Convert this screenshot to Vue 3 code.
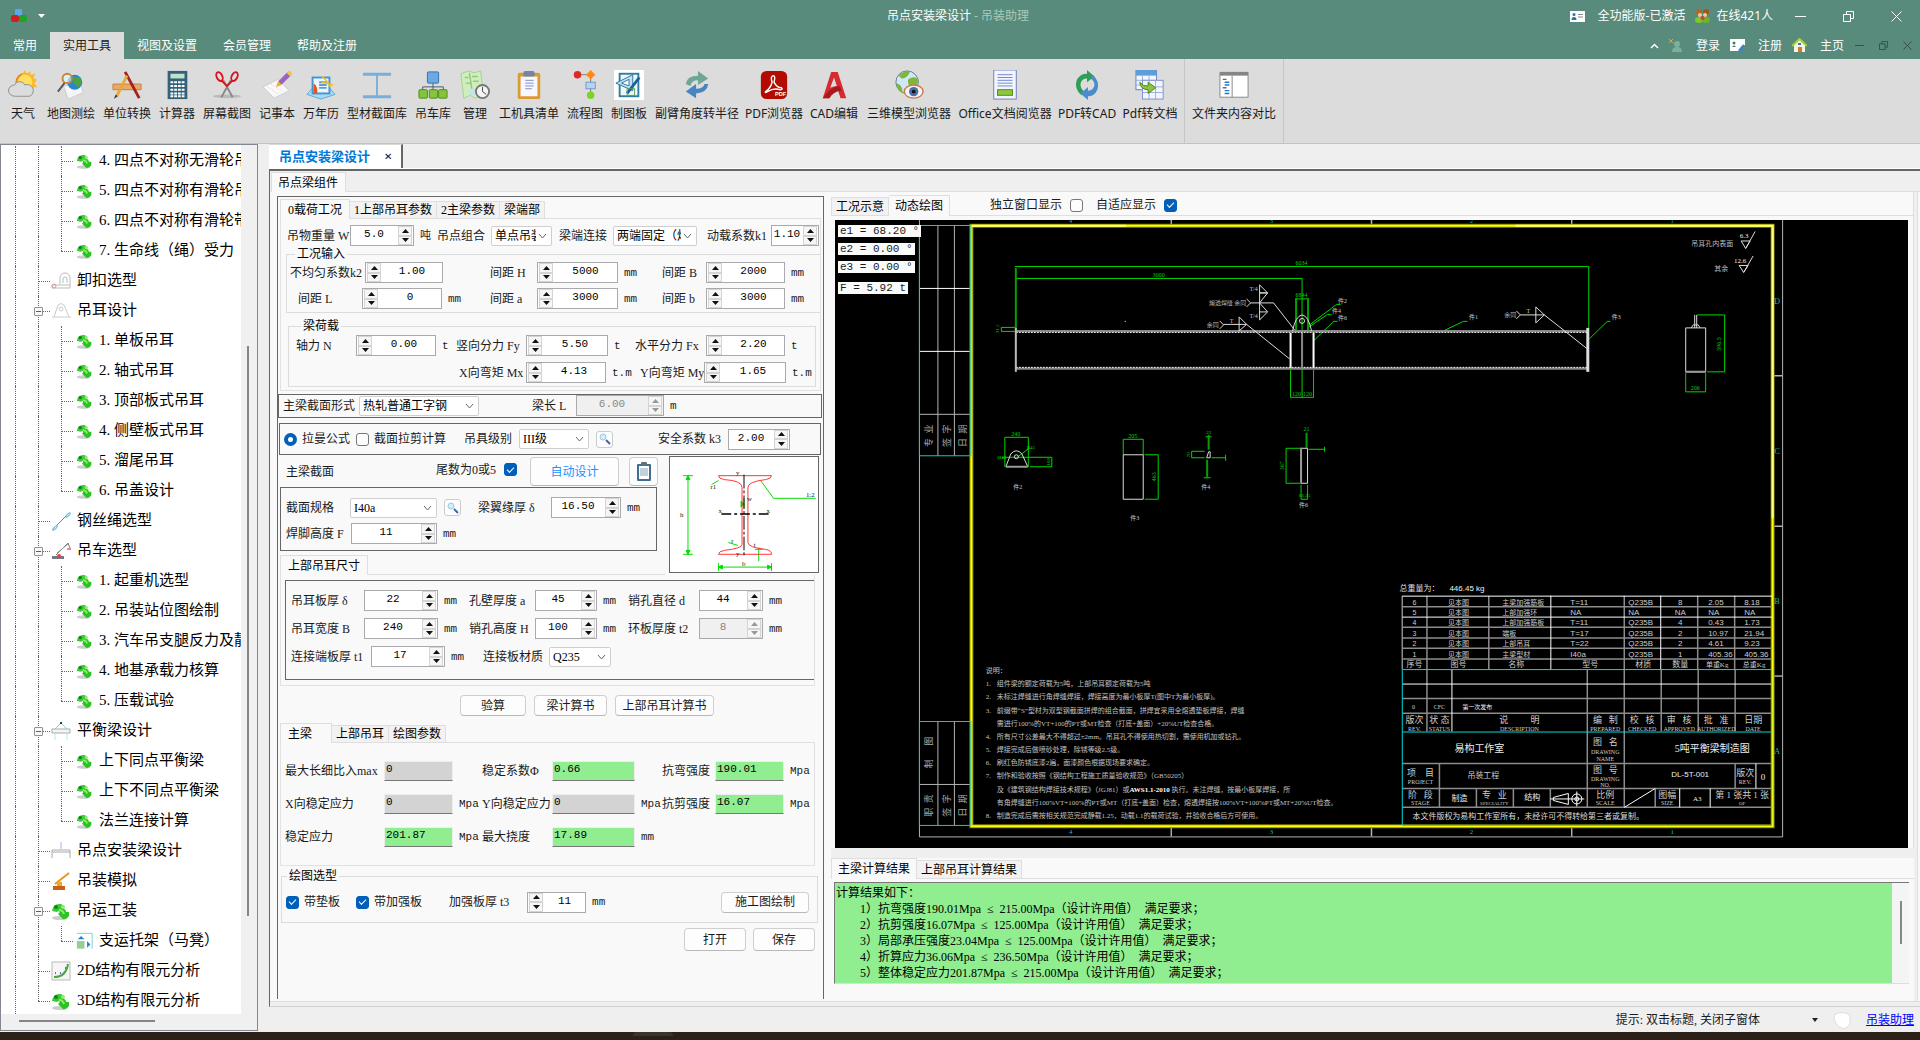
<template>
  <div class="app">
    <header class="titlebar">
      <div class="title-row">
        <div class="quick">
          <svg width="16" height="14" viewBox="0 0 16 14">
            <rect x="4" y="0" width="7" height="7" rx="1" fill="#5aa9ee" />
            <rect x="0" y="6" width="8" height="7" rx="2" fill="#cf1f1f" />
            <rect x="8" y="6" width="8" height="7" rx="2" fill="#22a02c" />
          </svg>
          <svg class="caret" width="7" height="4" viewBox="0 0 7 4"><path d="M0 0h7L3.500 4z" fill="#fff" /></svg>
        </div>
        <h1 class="title">吊点安装梁设计 <span>- 吊装助理</span></h1>
        <div class="account">
          <svg width="15" height="11" viewBox="0 0 15 11">
            <rect width="15" height="11" fill="#fff" />
            <circle cx="4" cy="3.500" r="1.500" fill="#2f6fb5" />
            <path d="M1.500 9q0-3 2.500-3t2.500 3z" fill="#2f6fb5" />
            <path d="M8 3.500h5M8 6h5" stroke="#888" />
          </svg>
          <span class="version">全功能版-已激活</span>
          <svg width="15" height="14" viewBox="0 0 15 14">
            <ellipse cx="4" cy="11" rx="4" ry="3" fill="#7fc62d" />
            <ellipse cx="11" cy="11" rx="4" ry="3" fill="#6db322" />
            <circle cx="4" cy="3" r="3" fill="#b5651d" />
            <circle cx="11" cy="3" r="3" fill="#a5541a" />
            <circle cx="5" cy="6" r="2" fill="#f1c9a0" />
            <circle cx="10" cy="6" r="2" fill="#f1c9a0" />
            <circle cx="7.500" cy="9" r="2" fill="#c9482a" />
          </svg>
          <span class="online">在线421人</span>
        </div>
        <div class="win-btns">
          <button v-for="b in winIcons" :key="b.name" :aria-label="b.name">
            <svg width="11" height="11" viewBox="0 0 11 11" fill="none" stroke="#fff"><path :d="b.d" /></svg>
          </button>
        </div>
      </div>
      <div class="tab-row">
        <nav class="ribbon-tabs">
          <button v-for="t in ribbonTabs" :key="t" :class="{ active: t === '实用工具' }">{{ t }}</button>
        </nav>
        <div class="user-links">
          <svg width="9" height="6" viewBox="0 0 9 6"><path d="M1 5l3.500-3.500L8 5" fill="none" stroke="#fff" stroke-width="1.500" /></svg>
          <svg class="person" width="14" height="14" viewBox="0 0 14 14">
            <circle cx="8" cy="5" r="3" fill="#79b29c" />
            <path d="M3 13q0-5 5-5t5 5z" fill="#79b29c" />
            <path d="M0 0l4 4M4 0l-4 4" stroke="#d6a645" />
          </svg>
          <a href="#">登录</a>
          <svg width="15" height="13" viewBox="0 0 15 13">
            <path d="M0 0h15v6l-6 6H0z" fill="#fff" />
            <circle cx="4" cy="4" r="1.500" fill="#447a69" />
            <path d="M2 8q2-3 4 0z" fill="#447a69" />
            <path d="M14 6l-5 6" stroke="#3a7fd0" stroke-width="2.500" />
          </svg>
          <a href="#">注册</a>
          <svg width="15" height="15" viewBox="0 0 15 15">
            <path d="M2 7v7h11V7L7.500 2z" fill="#f5f2e8" />
            <path d="M0 8l7.500-7L15 8" fill="none" stroke="#a9d13d" stroke-width="2" />
            <rect x="6" y="9" width="4" height="5" fill="#d67a1e" />
            <rect x="6" y="5" width="3" height="2" fill="#3c78b8" />
          </svg>
          <a href="#">主页</a>
        </div>
        <div class="mdi-btns">
          <button v-for="b in winIcons" :key="b.name" :aria-label="'子窗体' + b.name">
            <svg width="9" height="9" viewBox="0 0 11 11" fill="none" stroke="#2c473e"><path :d="b.d" /></svg>
          </button>
        </div>
      </div>
    </header>

    <section class="ribbon">
      <div class="ribbon-group">
        <button v-for="t in tools" :key="t.text" :style="{ width: t.w + 'px' }">
          <svg width="30" height="30" viewBox="0 0 32 32" v-html="t.icon"></svg>
          <span>{{ t.text }}</span>
        </button>
      </div>
      <div class="ribbon-group">
        <button :style="{ width: compare.w + 'px' }">
          <svg width="30" height="30" viewBox="0 0 32 32" v-html="compare.icon"></svg>
          <span>{{ compare.text }}</span>
        </button>
      </div>
    </section>

    <main class="main">
      <aside class="sidebar">
        <div class="tree-body">
          <div class="tree">
            <div v-for="(n, i) in tree" :key="i" class="node">
              <span class="guide"></span>
              <span v-if="n.lv === 3" class="guide"></span>
              <span class="elbow" :class="{ last: n.last, deep: n.lv === 3 }">
                <button v-if="n.open" class="toggle" aria-label="折叠"></button>
              </span>
              <svg class="node-icon" :class="{ deep: n.lv === 3 }" width="20" height="20" viewBox="0 0 20 20" v-html="nodeIcons[n.icon]"></svg>
              <span class="node-text">{{ n.text }}</span>
            </div>
          </div>
          <div class="vbar"><i></i></div>
        </div>
        <div class="hbar"><i></i></div>
      </aside>

      <section class="workspace">
        <div class="doc-tabs">
          <div class="doc-tab">吊点安装梁设计 <button aria-label="关闭">✕</button></div>
        </div>
        <div class="doc">
          <div class="strip outer"><button class="tab active">吊点梁组件</button></div>
          <div class="columns">
            <form class="form" @submit.prevent>
              <div class="strip load">
                <button class="tab active">0载荷工况</button>
                <button class="tab">1上部吊耳参数</button>
                <button class="tab">2主梁参数</button>
                <button class="tab">梁端部</button>
              </div>
              <div class="pane load-pane">
                <div class="row r-weight"><Cells :items="rows.weight" /></div>
                <fieldset class="group cond">
                  <legend>工况输入</legend>
                  <div class="row r-cond"><Cells :items="rows.cond1" /></div>
                  <div class="row r-cond second"><Cells :items="rows.cond2" /></div>
                </fieldset>
                <fieldset class="group beam">
                  <legend>梁荷载</legend>
                  <div class="row r-force"><Cells :items="rows.force" /></div>
                  <div class="row r-moment"><Cells :items="rows.moment" /></div>
                </fieldset>
              </div>

              <div class="frame shape"><div class="row r-shape"><Cells :items="rows.shape" /></div></div>

              <div class="frame formula">
                <label class="tick"><input type="radio" name="method" checked>拉曼公式</label>
                <label class="tick"><input type="checkbox">截面拉剪计算</label>
                <div class="row r-level"><Cells :items="rows.level" /></div>
                <button class="mini" aria-label="查询"><svg width="12" height="12" viewBox="0 0 12 12" v-html="searchIcon"></svg></button>
                <div class="row r-safe"><Cells :items="rows.safe" /></div>
              </div>

              <div class="section">
                <div class="section-left">
                  <div class="section-head">
                    <span>主梁截面</span>
                    <label class="tick after">尾数为0或5<input type="checkbox" checked></label>
                    <button class="btn auto">自动设计</button>
                    <button class="btn clip" aria-label="剪贴板">
                      <svg width="16" height="20" viewBox="0 0 16 20">
                        <rect x="1" y="2" width="14" height="17" rx="1" fill="#3f6f8c" />
                        <rect x="3" y="4" width="10" height="13" fill="#fff" />
                        <rect x="5" y="0" width="6" height="4" rx="1" fill="#5b7180" />
                        <path d="M4 7h8M4 9h8M4 11h8M4 13h8" stroke="#7fa3ba" />
                      </svg>
                    </button>
                  </div>
                  <div class="frame spec">
                    <div class="spec-line">
                      <div class="row r-spec"><Cells :items="rows.spec" /></div>
                      <button class="mini" aria-label="查询型材"><svg width="12" height="12" viewBox="0 0 12 12" v-html="searchIcon"></svg></button>
                      <div class="row r-flange"><Cells :items="rows.flange" /></div>
                    </div>
                    <div class="row r-weld"><Cells :items="rows.weld" /></div>
                  </div>
                </div>
                <svg class="profile" viewBox="669 455 150 117">
                  <g fill="none" stroke="#0d0">
                    <path d="M687 474v80M682 474h10M682 554h10M718 567h54M718 563v8M772 563v8M761 479l13 18h43M711 483l7-4M728 542l10 3M759 547v14M755 549h8M744 497v10" />
                    <path d="M685 478l2-4 2 4zM685 550l2 4 2-4zM722 565l-4 2 4 2zM768 565l4 2-4 2zM741 500l3 3-3 3z" fill="#0d0" />
                  </g>
                  <path d="M718 474h54M718 474q0 3 6 4q18 1 18 8v58q0 4-18 6q-6 1-6 4h54q0-4-6-5q-18-2-18-7v-56q0-6 18-8q6-1 6-4" fill="none" stroke="#f33" />
                  <path d="M744 473v84" stroke="#000" stroke-dasharray="14 2 3 2" />
                  <path d="M721 513h48" stroke="#000" stroke-width="1.500" stroke-dasharray="10 3 3 3" />
                  <g class="cad-serif" font-size="7" fill="#222">
                    <text x="736" y="473">y</text><text x="736" y="556">y</text>
                    <text x="718" y="512">x</text><text x="767" y="512">x</text>
                    <text x="679" y="516">h</text><text x="742" y="566">b</text>
                    <text x="710" y="488">r1</text><text x="731" y="543">r</text>
                    <text x="747" y="500">w</text><text x="754" y="547">t</text>
                    <text x="807" y="496">1:2</text>
                  </g>
                </svg>
              </div>

              <div class="strip lug"><button class="tab active">上部吊耳尺寸</button></div>
              <div class="pane lug-pane">
                <div class="frame lug-frame">
                  <div class="row r-lug"><Cells :items="rows.lug1" /></div>
                  <div class="row r-lug"><Cells :items="rows.lug2" /></div>
                  <div class="row r-plate"><Cells :items="rows.plate" /></div>
                </div>
              </div>

              <div class="actions">
                <button class="btn check">验算</button>
                <button class="btn book">梁计算书</button>
                <button class="btn lugbook">上部吊耳计算书</button>
              </div>

              <div class="strip out">
                <button class="tab active">主梁</button>
                <button class="tab">上部吊耳</button>
                <button class="tab">绘图参数</button>
              </div>
              <div class="pane out-pane">
                <div class="row r-out"><Cells :items="rows.out1" /></div>
                <div class="row r-out"><Cells :items="rows.out2" /></div>
                <div class="row r-out"><Cells :items="rows.out3" /></div>
              </div>

              <fieldset class="group draw">
                <legend>绘图选型</legend>
                <div class="draw-line">
                  <label class="tick"><input type="checkbox" checked>带垫板</label>
                  <label class="tick"><input type="checkbox" checked>带加强板</label>
                  <div class="row r-stiff"><Cells :items="rows.stiff" /></div>
                  <button class="btn make">施工图绘制</button>
                </div>
              </fieldset>
              <div class="file-btns">
                <button class="btn">打开</button>
                <button class="btn">保存</button>
              </div>
            </form>

            <div class="right">
              <div class="view">
                <div class="strip view-strip">
                  <button class="tab">工况示意</button>
                  <button class="tab active">动态绘图</button>
                  <label class="tick after">独立窗口显示<input type="checkbox"></label>
                  <label class="tick after">自适应显示<input type="checkbox" checked></label>
                </div>
                <div class="canvas">
                  <svg viewBox="835 220 1074 629">
                    <rect x="835" y="220" width="1074" height="629" fill="#000" />
                    <g fill="none" stroke="#b4b4b4">
                      <path d="M919.500 220V837.500H1783.500V220" />
                      <path d="M938 226V456M954.500 226V456M938 722V826M954.500 722V826M920 414.500H971M920 785H971" />
                      <path d="M1773 376H1783M1773 526.500H1783M1372 220V225M1372 827V837" stroke-width="1.500" />
                    </g>
                    <path d="M920 288.500H971M920 351.500H971M1171.500 220V225M1572.500 220V225M1171.500 827V837M1572.500 827V837M1773 676.500H1783" stroke="#fff" />
                    <path d="M971.500 225.700H1773.500V826.700H971.500z" fill="none" stroke="#7f7f00" stroke-width="4" />
                    <path d="M971.500 225.700H1773.500V826.700H971.500z" fill="none" stroke="#ff0" stroke-width="2" />
                    <path d="M1516 225.700H1773.500V518M972 225.700H1126" fill="none" stroke="#ffff80" stroke-width="2" />
                    <path d="M919.500 225.500H971V456H919.500zM919.500 722H971V826H919.500z" fill="none" stroke="#1cc" />

                    <!-- dimensions -->
                    <path :d="dims" fill="none" stroke="#00d800" />
                    <path d="M1016 268V330M1296.500 298V330M1308.500 298V330M1209 435V450M1207.500 460V478M1307 433V448" stroke="#00a000" stroke-width="2" />
                    <!-- beam -->
                    <path d="M1016 331H1589M1016 369H1589" stroke="#888" stroke-width="2" />
                    <path d="M1016 332.500H1589M1016 367.500H1589" stroke="#fff" stroke-dasharray="2 1" />
                    <path d="M1016 328V372" stroke="#bbb" stroke-width="2" />
                    <path d="M1588.500 328V372" stroke="#ddd" stroke-width="3" />
                    <path d="M1302.500 333V368" stroke="#888" stroke-width="2" />
                    <path d="M1291 333V368M1314 333V368" stroke="#fff" stroke-width="2" />
                    <path :d="outlines" fill="none" stroke="#ddd" />
                    <path d="M1006 467H1028M1686.500 372H1706.500M1301.500 448V483" stroke="#999" stroke-width="2" />
                    <rect x="1125" y="321" width="1" height="1" fill="#fff" />

                    <!-- title block -->
                    <path :d="blockGrid" fill="none" stroke="#8c8c8c" stroke-width="1.500" />
                    <path d="M1403 596.500H1773M1403 617.500H1773M1403 684.500H1773M1551.500 596V670M1661.500 596V670M1452.500 670V732M1756.800 764V789M1680.500 789V808M1711 789V808M1625 808L1656 789" fill="none" stroke="#fff" />
                    <path d="M1402.800 670V826M1403 670H1773M1403 732.500H1773M1403 826H1773M1772.500 670V826" fill="none" stroke="#0dd" />
                    <path d="M1554 798L1569 794V805L1554 801z M1551 799.500H1585M1577.500 792V807" fill="none" stroke="#fff" />
                    <circle cx="1577.500" cy="799.500" r="5" fill="none" stroke="#fff" />
                    <circle cx="1577.500" cy="799.500" r="2" fill="none" stroke="#fff" />

                    <g class="cad-serif">
                      <text v-for="(t, i) in cadTexts" :key="i" :x="t[0]" :y="t[1]" :font-size="t[3]" :fill="t[4] || '#ccc'"
                        :text-anchor="t[5] || 'middle'" :transform="t[6] ? `rotate(-90 ${t[0]} ${t[1]})` : null">{{ t[2] }}</text>
                      <template v-for="(n, i) in notes" :key="'n' + i">
                        <text x="986" :y="n[0]" font-size="7" fill="#c0c0c0">{{ n[1] }}</text>
                        <text x="997" :y="n[0]" font-size="7" fill="#c0c0c0">{{ n[2] }}<tspan v-if="n[3]" font-weight="700" fill="#fff">{{ n[3] }}</tspan>{{ n[4] }}</text>
                      </template>
                    </g>
                    <g class="cad-sans" font-size="8" fill="#ccc">
                      <template v-for="(p, i) in parts" :key="p[0]">
                        <text v-for="(v, c) in p" :key="c" :x="partX[c]" :y="605 + i * 10.400" :font-size="c < 3 ? 7 : 8"
                          :text-anchor="c < 2 || c === 5 ? 'middle' : 'start'">{{ v }}</text>
                      </template>
                      <text x="1450" y="591" fill="#eee">446.45 kg</text>
                      <text x="1691" y="778" text-anchor="middle" fill="#eee">DL-5T-001</text>
                    </g>
                  </svg>
                  <div class="readouts">
                    <span>e1 = 68.20 °</span>
                    <span>e2 = 0.00 °</span>
                    <span>e3 = 0.00 °</span>
                    <span class="force">F = 5.92 t</span>
                  </div>
                </div>
              </div>
              <div class="results">
                <div class="strip result-strip">
                  <button class="tab active">主梁计算结果</button>
                  <button class="tab">上部吊耳计算结果</button>
                </div>
                <div class="result-box">
                  <textarea readonly aria-label="主梁计算结果" :value="result"></textarea>
                  <div class="result-bar"><i></i></div>
                </div>
              </div>
            </div>
          </div>
        </div>
        <footer class="status">
          <span>提示: 双击标题, 关闭子窗体</span>
          <svg width="6" height="4" viewBox="0 0 6 4"><path d="M0 0h6L3 4z" fill="#222" /></svg>
          <svg width="20" height="20" viewBox="0 0 20 20">
            <path d="M2 5q8-5 16 0v9q-4 6-9 4q-7-3-7-13z" fill="#fff" stroke="#ddd" />
          </svg>
          <a href="#">吊装助理</a>
        </footer>
      </section>
    </main>
    <div class="taskbar"><i></i></div>
  </div>
</template>

<script setup>
  import { h } from "vue";

  const winIcons = [
    { name: "最小化", d: "M0 5.5h11" },
    { name: "还原", d: "M.5 3.5h7v7h-7zM3.500 3V.5h7v7H8" },
    { name: "关闭", d: "M.5.5l10 10M10.500.5l-10 10" }
  ];
  const ribbonTabs = ["常用", "实用工具", "视图及设置", "会员管理", "帮助及注册"];

  const tools = [
    { text: "天气", w: 32, icon: '<circle cx="18" cy="13" r="10" fill="#f0851d"/><path d="M18 0l2 4 4-3 0 4 5-1-2 5 4 1-3 4 3 4-5 1-8 2-9-6z" fill="#fbb92c"/><circle cx="18" cy="13" r="8" fill="#ffdf5e"/><path d="M8 28a7 6 0 0 1-1-12a6 6 0 0 1 11 0a6 6 0 0 1 5 12z" fill="#dcdcdc" stroke="#8d8d8d"/>' },
    { text: "地图测绘", w: 48, icon: '<path d="M8 17l18-3 3 10-16 7z" fill="#f5f5f5" stroke="#ccc"/><circle cx="20" cy="13" r="8" fill="#2b86d0"/><path d="M15 7q5 2 4 7l5 5q5-6 2-11z" fill="#4aa53c"/><circle cx="12" cy="9" r="5" fill="#dff" fill-opacity=".6" stroke="#c98436" stroke-width="2"/><path d="M9 14L2 23" stroke="#555" stroke-width="2"/>' },
    { text: "单位转换", w: 48, icon: '<path d="M1 15h30v6H1z" fill="#eaa869" stroke="#c77c3b"/><path d="M14 2L29 30" stroke="#a6201c" stroke-width="3"/><path d="M16 6L5 28" stroke="#e5a93c" stroke-width="3"/><path d="M4 26l-2 5 4-3z" fill="#333"/>' },
    { text: "计算器", w: 36, icon: '<rect x="6" y="1" width="21" height="30" fill="#33627a"/><rect x="9" y="4" width="15" height="5" fill="#bfe3c8"/><path d="M9 13h15M9 17h15M9 21h15M9 25h15M9 28h15" stroke="#fff" stroke-width="2" stroke-dasharray="3 1"/>' },
    { text: "屏幕截图", w: 48, icon: '<ellipse cx="16" cy="28" rx="15" ry="2" fill="#bbb"/><path d="M12 11L22 29M20 11L10 29" stroke="#888" stroke-width="2"/><ellipse cx="8" cy="7" rx="3" ry="5" transform="rotate(-25 8 7)" fill="none" stroke="#d8141c" stroke-width="2"/><ellipse cx="24" cy="7" rx="3" ry="5" transform="rotate(25 24 7)" fill="none" stroke="#d8141c" stroke-width="2"/><path d="M10 11l6 6 6-6" fill="none" stroke="#d8141c" stroke-width="2"/>' },
    { text: "记事本", w: 36, icon: '<path d="M1 18l16-8 12 12-16 8z" fill="#f8f8f8" stroke="#ccc"/><path d="M6 18l12 8M10 15l12 8" stroke="#ccc" stroke-dasharray="1 2"/><path d="M19 14L29 4" stroke="#9c62c0" stroke-width="5"/><path d="M28 5l3-3" stroke="#f1c64e" stroke-width="5"/><path d="M15 18l2-6 4 4z" fill="#e9b32b"/>' },
    { text: "万年历", w: 36, icon: '<path d="M1 26l7-8h16l7 8-15 5z" fill="#a8d8f4" stroke="#5ba7dc"/><rect x="7" y="8" width="18" height="17" fill="#eaf6ff" stroke="#3d95d6" stroke-width="2"/><path d="M14 13h8M14 16h8M14 19h8" stroke="#5a9fd0" stroke-width="2"/><path d="M8 14q5 3 4 11h-4z" fill="#e4561d"/><path d="M17 7q5 3 9 11M17 13l12 3" stroke="#f5bd22" stroke-width="1.500" fill="none"/>' },
    { text: "型材截面库", w: 60, icon: '<path d="M1 3h30v3H17v21h14v3H1v-3h14V6H1z" fill="#79aedb"/>' },
    { text: "吊车库", w: 36, icon: '<path d="M16 13v9M5 22v-4h22v4" fill="none" stroke="#456" stroke-width="1"/><rect x="10" y="2" width="12" height="12" rx="1" fill="#6aa9e6" stroke="#356fa8"/><g fill="#86c440" stroke="#4c8a17"><rect x="1" y="21" width="9" height="9" rx="1"/><rect x="12" y="21" width="9" height="9" rx="1"/><rect x="22" y="21" width="9" height="9" rx="1"/></g>' },
    { text: "管理", w: 32, icon: '<path d="M1 4l8-3 6 2 7-2 3 26-9 3-5-3-7 3z" fill="#cfeebc" stroke="#a5cf92"/><path d="M5 8h4M13 7h6M6 14h5M14 12h6M10 3l3 20" stroke="#8fc979" stroke-width="1.500"/><path d="M10 20h9v6h-9z" fill="#bfe4f5"/><circle cx="24" cy="23" r="7" fill="#f4f4f4" stroke="#777" stroke-width="2"/><path d="M24 18v5l4 3" fill="none" stroke="#444"/>' },
    { text: "工机具清单", w: 60, icon: '<rect x="4" y="3" width="24" height="28" rx="2" fill="#dc9a35"/><rect x="7" y="7" width="18" height="21" fill="#f7f8ff"/><rect x="10" y="1" width="12" height="6" rx="2" fill="#7286a8"/><path d="M12 11h9M12 14h9M12 17h9M12 20h7" stroke="#7a8ac8"/>' },
    { text: "流程图", w: 36, icon: '<path d="M8 5h14v24" fill="none" stroke="#777"/><circle cx="8" cy="5" r="4" fill="#e02626"/><path d="M22 0l5 5-5 5-5-5z" fill="#ff8a1c"/><rect x="17" y="13" width="10" height="7" fill="#b7d3ef" stroke="#6a9acb"/><circle cx="22" cy="27" r="4" fill="#7bd420"/>' },
    { text: "制图板", w: 36, icon: '<rect width="32" height="32" fill="#fff"/><rect x="6" y="4" width="20" height="24" fill="#eef8fb" stroke="#2f7d9c" stroke-width="2"/><path d="M2 14L20 5v17z" fill="#bfe3ef" stroke="#2b6f9f"/><path d="M8 14l8-4v7z" fill="#fff" stroke="#2b6f9f"/><path d="M14 25L27 8" stroke="#1c5c9c" stroke-width="3"/><rect x="14" y="20" width="8" height="7" fill="none" stroke="#57a05a"/>' },
    { text: "副臂角度转半径", w: 84, icon: '<path d="M4 15Q5 6 17 6V1l11 8-11 7v-5q-7 0-8 6z" fill="#6fa795"/><path d="M28 15q-1 9-13 10v5L4 23l11-8v5q8 0 9-5z" fill="#4885c0"/>' },
    { text: "PDF浏览器", w: 54, icon: '<rect x="2" y="1" width="28" height="30" rx="6" fill="#b30b00"/><path d="M15 6q3 0 1 7q3 6 8 6q2 2-2 2q-6-2-13 2q-3 2-2 0q5-3 7-10q-2-6 1-7z" fill="none" stroke="#fff" stroke-width="1.500"/><text x="17" y="28" font-size="6" font-weight="700" font-family="Liberation Sans" fill="#fff">PDF</text>' },
    { text: "CAD编辑", w: 50, icon: '<path d="M4 30L13 2h7l9 28h-6l-3-9q-6 0-9 9z" fill="#d52b30"/><path d="M16 8l-4 11q4-2 7-2z" fill="#dcdcdc"/><path d="M4 30q8-12 18-13l2 5q-8 0-13 8z" fill="#a8191f"/>' },
    { text: "三维模型浏览器", w: 84, icon: '<circle cx="14" cy="13" r="12" fill="#cfe7f7" stroke="#678"/><path d="M5 6q8-7 12-4q-3 7-9 7zM15 10q8-5 11 1q-2 9-7 8q-5-3-4-9zM3 14q6 2 6 9l3 2Q3 24 3 14z" fill="#7fb63a"/><ellipse cx="21" cy="23" rx="10" ry="7" fill="#f3f3fb" stroke="#cc7a48" stroke-width="1.500"/><circle cx="21" cy="23" r="5" fill="#4a6fa5"/><circle cx="21" cy="23" r="2" fill="#111"/>' },
    { text: "Office文档阅览器", w: 92, icon: '<rect x="4" y="0" width="24" height="31" fill="#f4f6ff" stroke="#6a7bb8"/><path d="M8 5h16M8 8h16M8 11h16M8 14h16M8 17h16" stroke="#6c83cc"/><rect x="8" y="21" width="16" height="6" fill="#8dc63f" stroke="#4f8a12"/>' },
    { text: "PDF转CAD", w: 56, icon: '<path d="M10 27Q2 20 5 11Q9 3 16 4V0l8 7-8 6V9q-6 0-7 6q0 5 4 8z" fill="#2f9e58"/><path d="M22 5q8 7 5 16q-3 7-10 7v4l-8-7 8-7v4q6 0 7-6q0-4-4-7z" fill="#4a8ccc"/>' },
    { text: "Pdf转文档", w: 54, icon: '<rect x="1" y="0" width="22" height="21" fill="#f3f6ff" stroke="#5f7ec0"/><rect x="1" y="0" width="22" height="6" fill="#5d9ed9"/><path d="M1 11h22M1 16h22M8 6v15M15 6v15" stroke="#98abdc"/><rect x="8" y="11" width="22" height="20" fill="#f3f6ff" stroke="#7b8ec8"/><path d="M8 18h22M8 24h22M15 11v20M22 11v20" stroke="#98abdc"/><path d="M5 13q4 5 9 4v-4l8 6-8 6v-4Q6 21 5 13z" fill="#8bc53f" stroke="#4d7f14"/>' }
  ];
  const compare = { text: "文件夹内容对比", w: 84, icon: '<rect x="1" y="3" width="30" height="26" fill="#fff" stroke="#858585"/><rect x="1" y="2" width="30" height="4" fill="#858585"/><path d="M14 6v23" stroke="#858585"/><path d="M4 10h4M6 13h5M6 16h5M4 19h4M6 22h5M6 25h5" stroke="#2a78c2" stroke-width="1.500"/>' };

  const nodeIcons = {
    leaf: '<ellipse cx="9" cy="17" rx="8" ry="2" fill="#ccc"/><path d="M1 10q1-8 9-7q5 2 2 6q-4 0-6 2z" fill="#3cc93a"/><path d="M7 8q8-2 8 3h3v4q-3 4-6 3l-5-5q3-1 0-5z" fill="#29c41f"/><circle cx="5" cy="6" r="2" fill="#0b8a12"/><circle cx="12" cy="6" r="2" fill="#8df06a"/><path d="M8 9q4 0 5 4" stroke="#8df06a" stroke-width="2" fill="none"/>',
    shackle: '<path d="M9 13V7a5 5 0 0 1 10 0v7M12 12V8a2 2 0 0 1 4 0v4M1 14h18v3H1z" fill="none" stroke="#bbb"/><circle cx="3" cy="15" r="2" fill="none" stroke="#d99"/>',
    lug: '<path d="M1 16h19M3 16L7 4q3-3 6 0l5 12" fill="none" stroke="#ccc"/><circle cx="10" cy="8" r="2" fill="none" stroke="#ccc"/>',
    rope: '<path d="M5 15L15 5" stroke="#39b" stroke-width="1"/><ellipse cx="17" cy="4" rx="1" ry="3" transform="rotate(45 17 4)" fill="none" stroke="#4bd"/><ellipse cx="4" cy="17" rx="1" ry="3" transform="rotate(45 4 17)" fill="none" stroke="#4bd"/>',
    crane: '<path d="M5 14L17 2l2 5" fill="none" stroke="#777"/><path d="M6 12L17 3" stroke="#999"/><path d="M1 15h12v3H1z" fill="#778"/><circle cx="8" cy="15" r="2" fill="#d44"/><path d="M16 8h4" stroke="#e88" stroke-width="2"/>',
    beam: '<path d="M4 8l6-6 6 6" fill="none" stroke="#8cc"/><circle cx="10" cy="2" r="1" fill="#000"/><path d="M1 8h18v4H1z" fill="#f4f4f4" stroke="#aaa"/><path d="M4 13v6M16 13v6" stroke="#aee"/>',
    hang: '<path d="M1 17V9h18v8M1 11h18" fill="none" stroke="#aaa"/><path d="M10 1v7" stroke="#cde" stroke-width="2"/>',
    sim: '<path d="M4 13L18 2" stroke="#e8961c" stroke-width="2"/><path d="M2 15h12v4H2z" fill="#c96018"/><path d="M6 11h5v4H6z" fill="#f2a52c"/>',
    support: '<path d="M1 1h18v18" fill="none" stroke="#6cc"/><rect x="1" y="10" width="9" height="9" fill="#9c9"/><path d="M2 8l4-4 4 4zM13 10l4 4-4 4z" fill="#28c"/>',
    chart: '<rect x="1" y="1" width="18" height="18" fill="#f6f6f6" stroke="#bbb"/><path d="M3 16q12 0 14-13" fill="none" stroke="#4a4" stroke-width="2"/><path d="M4 12h1M9 12h1M14 7h1" stroke="#66c" stroke-width="2"/>'
  };

  const leaf = (text, last) => ({ lv: 3, text, last, icon: "leaf" });
  const tree = [
    leaf("4. 四点不对称无滑轮吊装"),
    leaf("5. 四点不对称有滑轮吊装"),
    leaf("6. 四点不对称有滑轮带梁"),
    leaf("7. 生命线（绳）受力", true),
    { lv: 2, text: "卸扣选型", icon: "shackle" },
    { lv: 2, text: "吊耳设计", icon: "lug", open: true },
    leaf("1. 单板吊耳"),
    leaf("2. 轴式吊耳"),
    leaf("3. 顶部板式吊耳"),
    leaf("4. 侧壁板式吊耳"),
    leaf("5. 溜尾吊耳"),
    leaf("6. 吊盖设计", true),
    { lv: 2, text: "钢丝绳选型", icon: "rope" },
    { lv: 2, text: "吊车选型", icon: "crane", open: true },
    leaf("1. 起重机选型"),
    leaf("2. 吊装站位图绘制"),
    leaf("3. 汽车吊支腿反力及静载"),
    leaf("4. 地基承载力核算"),
    leaf("5. 压载试验", true),
    { lv: 2, text: "平衡梁设计", icon: "beam", open: true },
    leaf("上下同点平衡梁"),
    leaf("上下不同点平衡梁"),
    leaf("法兰连接计算", true),
    { lv: 2, text: "吊点安装梁设计", icon: "hang" },
    { lv: 2, text: "吊装模拟", icon: "sim" },
    { lv: 2, text: "吊运工装", icon: "leaf", open: true },
    { lv: 3, text: "支运托架（马凳）", icon: "support", last: true },
    { lv: 2, text: "2D结构有限元分析", icon: "chart" },
    { lv: 2, text: "3D结构有限元分析", icon: "leaf", last: true }
  ];

  const searchIcon = '<circle cx="4" cy="4" r="3" fill="#d5ecfb" stroke="#9cc8e8"/><path d="M7 7l4 4" stroke="#3d66b0" stroke-width="2"/>';

  // each entry of a row: label, control kind, value, unit
  const triangle = (d) => h("svg", { width: 7, height: 4, viewBox: "0 0 7 4" }, h("path", { d, fill: "currentColor" }));
  const control = (id, kind, value) => {
    if (kind === "pick") {
      return h("span", { class: "pick" }, [
        h("select", { id }, h("option", value)),
        h("svg", { width: 9, height: 6, viewBox: "0 0 9 6" }, h("path", { d: "M1 1l3.500 4L8 1", fill: "none", stroke: "#666" }))
      ]);
    }
    if (kind === "good" || kind === "idle") {
      return h("input", { id, class: ["result", kind], value, readonly: true });
    }
    const off = kind === "off";
    return h("span", { class: ["spin", kind] }, [
      h("input", { id, value, disabled: off }),
      h("span", { class: "updown" }, [
        h("button", { type: "button", "aria-label": "增加", disabled: off }, triangle("M3.500 0L7 4H0z")),
        h("button", { type: "button", "aria-label": "减少", disabled: off }, triangle("M0 0h7L3.500 4z"))
      ])
    ]);
  };
  const Cells = ({ items }) => items.flatMap(([label, kind, value, unit]) => {
    const id = "f-" + label.replace(/\s/g, "");
    return [
      h("label", { class: "cap", for: id }, label),
      control(id, kind, value),
      h("span", { class: "unit" }, unit)
    ];
  });
  Cells.props = ["items"];

  const rows = {
    weight: [["吊物重量 W", "rt", "5.0", "吨"], ["吊点组合", "pick", "单点吊装"], ["梁端连接", "pick", "两端固定（焊接）"], ["动载系数k1", "rt", "1.10"]],
    cond1: [["不均匀系数k2", "lt", "1.00"], ["间距 H", "lt", "5000", "mm"], ["间距 B", "lt", "2000", "mm"]],
    cond2: [["间距 L", "lt", "0", "mm"], ["间距 a", "lt", "3000", "mm"], ["间距 b", "lt", "3000", "mm"]],
    force: [["轴力 N", "lt", "0.00", "t"], ["竖向分力 Fy", "lt", "5.50", "t"], ["水平分力 Fx", "lt", "2.20", "t"]],
    moment: [["X向弯矩 Mx", "lt", "4.13", "t.m"], ["Y向弯矩 My", "lt", "1.65", "t.m"]],
    shape: [["主梁截面形式", "pick", "热轧普通工字钢"], ["梁长 L", "off", "6.00", "m"]],
    level: [["吊具级别", "pick", "III级"]],
    safe: [["安全系数 k3", "rt", "2.00"]],
    spec: [["截面规格", "pick", "I40a"]],
    flange: [["梁翼缘厚 δ", "rt", "16.50", "mm"]],
    weld: [["焊脚高度 F", "rt", "11", "mm"]],
    lug1: [["吊耳板厚 δ", "rt", "22", "mm"], ["孔壁厚度 a", "rt", "45", "mm"], ["销孔直径 d", "rt", "44", "mm"]],
    lug2: [["吊耳宽度 B", "rt", "240", "mm"], ["销孔高度 H", "rt", "100", "mm"], ["环板厚度 t2", "off", "8", "mm"]],
    plate: [["连接端板厚 t1", "rt", "17", "mm"], ["连接板材质", "pick", "Q235"]],
    out1: [["最大长细比入max", "idle", "0"], ["稳定系数Φ", "good", "0.66"], ["抗弯强度", "good", "190.01", "Mpa"]],
    out2: [["X向稳定应力", "idle", "0", "Mpa"], ["Y向稳定应力", "idle", "0", "Mpa"], ["抗剪强度", "good", "16.07", "Mpa"]],
    out3: [["稳定应力", "good", "201.87", "Mpa"], ["最大挠度", "good", "17.89", "mm"]],
    stiff: [["加强板厚 t3", "lt", "11", "mm"]]
  };

  const result = [
    "计算结果如下：",
    "        1）抗弯强度190.01Mpa  ≤  215.00Mpa（设计许用值）  满足要求；",
    "        2）抗剪强度16.07Mpa  ≤  125.00Mpa（设计许用值）  满足要求；",
    "        3）局部承压强度23.04Mpa  ≤  125.00Mpa（设计许用值）  满足要求；",
    "        4）折算应力36.06Mpa  ≤  236.50Mpa（设计许用值）  满足要求；",
    "        5）整体稳定应力201.87Mpa  ≤  215.00Mpa（设计许用值）  满足要求；"
  ].join("\n");

  const dims = [
    "M1015 266.500H1589.500V328M1016 278.500H1302.500V398M1001.500 327.500H1016V331.500H1001.500z",
    "M1296 299H1309M1291 370V397.500H1314V370M1310 325L1337 304.500H1341M1308 328L1328 314.500H1332M1314 341L1334 321.500H1338",
    "M1445 330.500L1464 321.500H1468M1590 339L1608 321.500H1611",
    "M1698 315H1725.500V372H1708M1686.500 373V392H1706.500V373",
    "M1005 467V437.500H1028.500V467M1002 457.500H1052V467H1030M1018 457L1030 448",
    "M1123.500 455V439.500H1143.500V455M1145 455H1158.500V499.500H1145",
    "M1205 451.500H1192V458H1205M1212 458H1226M1226 455V461M1204 478H1211M1206 437H1212",
    "M1301 448.500H1286.500V483.500H1301M1309 449.500H1325M1325 447V452M1301.500 485V499.500H1308V485"
  ].join("");

  const outlines = [
    "M1293 331Q1296 316 1302.500 315Q1309 316 1312 331M1300 321a2.500 2.500 0 1 0 5 0a2.500 2.500 0 1 0-5 0",
    "M1247 299L1251 303L1247 307M1251 303H1274L1295 330M1260 285V320M1260 285L1268 293H1260L1268 293L1260 303L1268 312H1260M1268 312L1260 320",
    "M1220 321L1224 325L1220 329M1224 324.500H1247L1290 359M1239.500 317V331L1247 324.500z",
    "M1517 311L1521 315L1517 319M1521 315H1545L1588 349M1536.500 307V323L1545 315z",
    "M1686.500 328H1706.500V372H1686.500zM1695.500 315V328M1697.500 315V328M1692 328L1694 325H1699L1701 328",
    "M1742 241H1751L1746.500 248.500L1742 241M1746.500 248.500L1756 231.500M1740 265.500H1749L1744.500 272.500L1740 265.500M1744.500 272.500L1754 256",
    "M1006 467L1011 454Q1016.500 448 1022 454L1028 467M1014.500 457a2 2 0 1 0 4 0a2 2 0 1 0-4 0",
    "M1123.500 455H1143.500V499.500H1123.500zM1207 458L1209 452H1210.500V458zM1301.500 448.500H1308V483.500H1301.500z"
  ].join("");

  const blockGrid = [
    "M1403 607H1773M1403 627.700H1773M1403 638.300H1773M1403 648.700H1773M1403 659.300H1773",
    "M1402.800 596V670M1427.500 596V732M1489.400 596V670M1625 596V808M1698.500 596V670M1735.500 596V670",
    "M1403 699H1773M1403 713.700H1773M1403 764H1773M1403 789H1773M1403 807.700H1773",
    "M1588 670V808M1662 670V732M1699 670V732M1736 670V732M1440 764V808M1736 764V789M1477 789V808M1514 789V808M1551 789V808M1656 789V808"
  ].join("");

  const cy = "#1bb";
  const gr = "#00d000";
  const cadTexts = [
    [1071, 223, "4", 6, cy], [1272, 223, "3", 6, cy], [1472, 223, "2", 6, cy], [1673, 223, "1", 6, cy],
    [1071, 835, "4", 7, cy], [1272, 835, "3", 7, cy], [1472, 835, "2", 7, cy], [1673, 835, "1", 7, cy],
    [1778, 304, "D", 8, cy], [1778, 454, "C", 8, cy], [1778, 604, "B", 8, cy], [1778, 755, "A", 8, cy],
    [932, 436, "专  业", 9, "#aaa", "middle", 1], [950, 436, "签  字", 9, "#aaa", "middle", 1], [966, 436, "日  期", 9, "#aaa", "middle", 1],
    [932, 753, "制      图", 9, "#aaa", "middle", 1], [932, 806, "职  责", 9, "#aaa", "middle", 1], [950, 806, "签  字", 9, "#aaa", "middle", 1], [966, 806, "日  期", 9, "#aaa", "middle", 1],
    [1302, 265, "6034", 6, gr], [1159, 277, "3000", 6, gr], [1302, 297, "6844", 6, gr], [1297, 396, "120", 6, gr], [1308, 396, "120", 6, gr],
    [999, 329, "31.5", 5, gr, "middle", 1], [1016, 436, "240", 6, gr], [1002, 459, "Ø44", 5, gr], [1031, 449, "R45", 5, gr], [1050, 462, "100", 5, gr, "middle", 1],
    [1133, 438, "205", 6, gr], [1156, 477, "463", 6, gr, "middle", 1], [1209, 434, "22", 5, gr], [1190, 455, "70", 5, gr, "middle", 1],
    [1307, 431, "21", 6, gr], [1284, 466, "367", 6, gr, "middle", 1], [1305, 497, "66 25", 5, gr], [1722, 344, "596.5", 6, gr, "middle", 1], [1696, 390, "206", 6, gr],
    [1343, 303, "件2", 6], [1337, 313, "件4", 6], [1343, 320, "件6", 6], [1474, 319, "件1", 6], [1617, 319, "件3", 6],
    [1018, 489, "件2", 6], [1135, 520, "件3", 6], [1206, 489, "件4", 6], [1304, 507, "件6", 6],
    [1228, 305, "熔透焊缝 余同", 6, "#bbb"], [1254, 291, "T/4", 6], [1254, 318, "T/4", 6], [1213, 327, "余同", 6, "#bbb"], [1232, 323, "T", 6], [1511, 317, "余同", 6, "#bbb"], [1529, 313, "T", 6],
    [1713, 246, "吊耳孔内表面", 7, "#bbb"], [1745, 238, "6.3", 7, "#eee"], [1722, 271, "其余", 7, "#bbb"], [1741, 263, "12.6", 7, "#eee"],
    [1400, 591, "总重量为：", 8, "#ddd", "start"],
    [1415, 667, "序号", 8], [1459, 667, "图号", 8], [1517, 667, "名称", 8], [1591, 667, "型号", 8], [1644, 667, "材质", 8], [1681, 667, "数量", 8], [1718, 667, "单重Kg", 7], [1755, 667, "总重Kg", 7],
    [1414, 709, "0", 6], [1440, 709, "CFC", 6], [1463, 709, "第一次发布", 6, "#eee", "start"],
    [1415, 723, "版次", 9], [1440, 723, "状 态", 9], [1520, 723, "说          明", 9], [1606, 723, "编   制", 9], [1643, 723, "校   核", 9], [1680, 723, "审   核", 9], [1717, 723, "批   准", 9], [1754, 723, "日期", 9],
    [1415, 731, "REV.", 6], [1440, 731, "STATUS", 6], [1520, 731, "DESCRIPTION", 6], [1606, 731, "PREPARED", 6], [1643, 731, "CHECKED", 6], [1680, 731, "APPROVED", 6], [1717, 731, "AUTHORIZED", 6], [1754, 731, "DATE", 6],
    [1480, 753, "易构工作室", 10, "#eee"], [1606, 746, "图   名", 9], [1606, 755, "DRAWING", 6], [1606, 762, "NAME", 6], [1713, 753, "5吨平衡梁制造图", 10, "#eee"],
    [1421, 777, "项    目", 9], [1421, 785, "PROJECT", 6], [1484, 779, "吊装工程", 8], [1606, 774, "图   号", 9], [1606, 782, "DRAWING", 6], [1606, 788, "NO.", 6],
    [1746, 777, "版次", 9], [1746, 785, "REV.", 6], [1764, 781, "0", 9, "#eee"],
    [1421, 799, "阶   段", 9], [1421, 806, "STAGE", 6], [1460, 802, "制造", 8, "#eee"], [1495, 799, "专   业", 9], [1495, 806, "SPECIALITY", 5], [1533, 801, "结构", 8, "#eee"],
    [1606, 799, "比例", 9], [1606, 806, "SCALE", 6], [1668, 799, "图幅", 9], [1668, 806, "SIZE", 6], [1698, 802, "A3", 7, "#eee"], [1743, 799, "第 1 张共 1 张", 9], [1743, 806, "OF", 5],
    [1413, 820, "本文件版权为易构工作室所有，未经许可不得转给第三者或复制。", 8, "#ddd", "start"]
  ];

  const notes = [
    [673, "说明："],
    [686, "1.", "组件梁的额定荷载为5吨，上部吊耳额定荷载为5吨"],
    [699, "2.", "未标注焊缝进行角焊缝焊接，焊接高度为最小板厚T(图中T为最小板厚)。"],
    [713, "3.", "前缀带“S”型材为双型钢截面拼焊的组合截面，拼焊宜采用全熔透垫板焊接，焊缝"],
    [726, "", "需进行100%的VT+100的PT或MT检查（打底+盖面）+20%UT检查合格。"],
    [739, "4.", "所有尺寸公差最大不得超过±2mm。吊耳孔不得使用热切割，需使用机加或钻孔。"],
    [753, "5.", "焊接完成后做喷砂处理，除锈等级2.5级。"],
    [766, "6.", "刷红色防锈底漆2遍，面漆颜色根据现场要求确定。"],
    [779, "7.", "制作和验收按照《钢结构工程施工质量验收规范》（GB50205）"],
    [793, "", "及《建筑钢结构焊接技术规程》（JGJ81）或", "AWS1.1-2010", " 执行。未注焊缝，按最小板厚焊接，所"],
    [806, "", "有角焊缝进行100%VT+100%的PT或MT（打底+盖面）检查，熔透焊接按100%VT+100%PT或MT+20%UT检查。"],
    [819, "8.", "制造完成后需按相关规范完成静载1.25，动载1.1的载荷试验，并验收合格后方可使用。"]
  ];

  const partX = [1415, 1459, 1503, 1571, 1629, 1681, 1709, 1745];
  const parts = [
    ["6", "见本图", "主梁加强筋板", "T=11", "Q235B", "8", "2.05", "8.18"],
    ["5", "见本图", "上部加强环", "NA", "NA", "NA", "NA", "NA"],
    ["4", "见本图", "上部加强筋板", "T=11", "Q235B", "4", "0.43", "1.73"],
    ["3", "见本图", "端板", "T=17", "Q235B", "2", "10.97", "21.94"],
    ["2", "见本图", "上部吊耳", "T=22", "Q235B", "2", "4.61", "9.23"],
    ["1", "见本图", "主梁型材", "I40a", "Q235B", "1", "405.36", "405.36"]
  ];
</script>

<style>
  body {
    background: #f0f0f0;
  }

  * {
    box-sizing: border-box;
  }

  button,
  input,
  select,
  textarea {
    font: inherit;
    color: inherit;
    margin: 0;
    padding: 0;
    border: none;
    background: none;
    outline: none;
    white-space: nowrap;
  }
</style>

<style scoped>
  .app {
    height: 100vh;
    display: flex;
    flex-direction: column;
    overflow: hidden;
    background: #efefef;
    color: #1a1a1a;
    font: 12px/16px "Liberation Serif", "Noto Sans CJK SC", sans-serif;
    white-space: nowrap;
  }

  svg {
    display: block;
    flex: none;
  }

  /* title bar */
  .titlebar {
    background: #588b7b;
    color: #fff;
    height: 59px;
    flex: none;
    font-family: "Noto Sans", "Noto Sans CJK SC", sans-serif;
  }

  .title-row {
    height: 32px;
    display: grid;
    grid-template-columns: 1fr auto 1fr auto;
    align-items: center;
  }

  .quick {
    display: flex;
    align-items: center;
    gap: 11px;
    padding-left: 11px;
  }

  .title {
    margin: 0;
    padding-left: 140px;
    font-size: 12px;
    font-weight: 400;
  }

  .title span {
    color: #a9cabd;
  }

  .account {
    display: flex;
    align-items: center;
    justify-content: flex-end;
    gap: 6px;
  }

  .version {
    margin: 0 4px 0 7px;
  }

  .online {
    margin-right: 3px;
  }

  .win-btns {
    display: flex;
  }

  .win-btns button {
    width: 48px;
    height: 32px;
    display: grid;
    place-items: center;
  }

  .tab-row {
    height: 27px;
    display: flex;
    align-items: center;
  }

  .ribbon-tabs {
    display: flex;
    flex: 1;
    height: 27px;
  }

  .ribbon-tabs button {
    padding: 0 13px;
  }

  .ribbon-tabs .active {
    background: #dcdcdc;
    color: #222;
  }

  .user-links {
    display: flex;
    align-items: center;
    gap: 10px;
  }

  .user-links a {
    color: #fff;
    text-decoration: none;
    padding-left: 3px;
  }

  .mdi-btns {
    display: flex;
    padding: 0 1px 0 3px;
  }

  .mdi-btns button {
    width: 24px;
    height: 24px;
    display: grid;
    place-items: center;
  }

  /* ribbon */
  .ribbon {
    height: 85px;
    flex: none;
    display: flex;
    background: #dcdcdc;
    border-bottom: 1px solid #c2c2c2;
    font-family: "Noto Sans", "Noto Sans CJK SC", sans-serif;
  }

  .ribbon-group {
    display: flex;
    align-items: flex-start;
    gap: 8px;
    padding: 11px 7px 0;
    border-right: 1px solid #c6c6c6;
  }

  .ribbon-group button {
    display: flex;
    flex-direction: column;
    align-items: center;
    gap: 6px;
  }

  .main {
    flex: 1;
    min-height: 0;
    display: flex;
  }

  /* tree */
  .sidebar {
    width: 258px;
    flex: none;
    display: flex;
    flex-direction: column;
    border: 1px solid #828790;
    margin-bottom: 1px;
    background: #f0f0f0;
    color: #000;
    font-size: 15px;
  }

  .tree-body {
    flex: 1;
    min-height: 0;
    display: flex;
  }

  .tree {
    flex: 1;
    overflow: hidden;
    background: #fff;
    padding-top: 1px;
  }

  .node {
    display: flex;
    height: 30px;
    padding-left: 14px;
    align-items: center;
  }

  .guide {
    width: 23px;
    height: 30px;
    flex: none;
    border-left: 1px dotted #666;
  }

  .elbow {
    position: relative;
    width: 13px;
    height: 30px;
    flex: none;
  }

  .elbow.deep {
    width: 15px;
  }

  .elbow::before,
  .elbow::after {
    content: "";
    position: absolute;
    left: 0;
    top: 0;
    height: 100%;
    border-left: 1px dotted #666;
  }

  .elbow.last::before {
    height: 50%;
  }

  .elbow::after {
    top: 15px;
    height: 0;
    width: 12px;
    border-left: none;
    border-top: 1px dotted #666;
  }

  .toggle {
    position: absolute;
    z-index: 1;
    left: -4px;
    top: 11px;
    width: 9px;
    height: 9px;
    border: 1px solid #919191;
    border-radius: 1px;
    background: linear-gradient(#3a5fae, #3a5fae) center / 5px 1px no-repeat #f8f8f8;
  }

  .node-icon.deep {
    width: 17px;
  }

  .node-text {
    margin: -2px 0 0 6px;
    line-height: 20px;
  }

  .vbar {
    width: 16px;
    flex: none;
    padding: 201px 0 0 6px;
  }

  .vbar i {
    display: block;
    width: 2px;
    height: 570px;
    background: #868686;
  }

  .hbar {
    height: 16px;
    flex: none;
    padding: 6px 0 0 18px;
  }

  .hbar i {
    display: block;
    width: 136px;
    height: 2px;
    background: #868686;
  }

  /* document */
  .workspace {
    flex: 1;
    min-width: 0;
    display: flex;
    flex-direction: column;
    padding-left: 11px;
  }

  .doc-tabs {
    height: 25px;
    flex: none;
    display: flex;
    border-bottom: 1px solid #fff;
  }

  .doc-tab {
    width: 134px;
    background: #fff;
    border-right: 2px solid #666;
    border-top: 1px solid #d8d8d8;
    padding-left: 10px;
    font-size: 13px;
    line-height: 23px;
    font-weight: 700;
    color: #0078d7;
    display: flex;
    align-items: center;
    gap: 14px;
  }

  .doc-tab button {
    color: #111;
    font: 700 10px "DejaVu Sans", sans-serif;
  }

  .doc {
    flex: 1;
    min-height: 0;
    display: flex;
    flex-direction: column;
    border-top: 2px solid #666;
    border-left: 1px solid #666;
    border-bottom: 1px solid #d0d0d0;
  }

  .strip {
    display: flex;
    align-items: flex-end;
    border-bottom: 1px solid #dedede;
  }

  .tab {
    height: 17px;
    padding: 0 4px;
    border: 1px solid #dedede;
    border-left: none;
    border-bottom: none;
    background: #f2f2f2;
    color: #000;
  }

  .tab.active {
    height: 20px;
    padding: 0 7px;
    margin-bottom: -1px;
    border-left: 1px solid #dedede;
    background: #f9f9f9;
  }

  .strip.outer {
    height: 21px;
    flex: none;
    margin-left: 1px;
  }

  .strip.outer .active {
    padding: 0 7px 0 6px;
  }

  .columns {
    flex: 1;
    min-height: 0;
    display: flex;
    background: #f9f9f9;
    padding-left: 7px;
    margin-bottom: 4px;
    border-bottom: 1px solid #dedede;
  }

  .form {
    width: 547px;
    flex: none;
    margin: 4px 0 2px;
    border: 1px solid #666;
    border-bottom: none;
  }

  .pane {
    border: 1px solid #e2e2e2;
    border-top: none;
  }

  .strip.load {
    height: 22px;
    margin: 0 2px;
  }

  .load-pane {
    margin: 0 2px;
    height: 172px;
    padding: 6px 0 0 6px;
  }

  .row {
    display: grid;
    height: 21px;
    align-items: center;
  }

  .r-weight {
    grid-template-columns: 63px 64px 23px 54px 61px 7px 54px 84px 10px 64px 48px 0;
  }

  .group {
    min-width: 0;
    margin: 0;
    padding: 0;
    border: 1px solid #dcdcdc;
  }

  .group legend {
    padding: 0 2px;
    margin-left: 5px;
    color: #000;
    height: 15px;
    line-height: 15px;
  }

  .group.cond {
    margin: 1px 0 0 -1px;
    padding-left: 3px;
    border-right: none;
    height: 66px;
  }

  .r-cond {
    grid-template-columns: 75px 78px 47px 47px 81px 44px 44px 79px 34px;
    margin-bottom: 5px;
  }

  .r-cond.second {
    grid-template-columns: 64px 80px 48px 47px 81px 44px 44px 79px 34px;
    padding-left: 8px;
  }

  .group.beam {
    margin: 6px 4px 0 1px;
    padding: 1px 0 0 7px;
    height: 68px;
  }

  .r-force {
    grid-template-columns: 60px 80px 20px 70px 82px 27px 71px 79px 34px;
    margin-bottom: 6px;
  }

  .r-moment {
    grid-template-columns: 67px 80px 34px 64px 82px 30px;
    padding-left: 163px;
  }

  .frame {
    border: 1px solid #666;
  }

  .shape {
    height: 24px;
    margin: 3px 1px 0 0;
    padding: 0 0 0 4px;
  }

  .r-shape {
    grid-template-columns: 76px 120px 53px 44px 88px 30px;
  }

  .formula {
    height: 32px;
    margin: 5px 2px 0 1px;
    padding-left: 4px;
    display: flex;
    align-items: center;
  }

  .tick {
    display: flex;
    align-items: center;
    gap: 5px;
    margin-right: 6px;
  }

  .tick.after {
    gap: 8px;
  }

  .tick input {
    appearance: none;
    width: 13px;
    height: 13px;
    border: 1px solid #777;
    border-radius: 3px;
    background: #fdfdfd;
    display: grid;
    place-items: center;
  }

  .tick input[type="radio"] {
    border-radius: 50%;
  }

  .tick input[type="radio"]:checked {
    border: 4px solid #005fb8;
    background: #fff;
  }

  .tick input[type="checkbox"]:checked {
    border-color: #005fb8;
    background: #005fb8;
  }

  .tick input[type="checkbox"]:checked::before {
    content: "";
    width: 6px;
    height: 3px;
    margin-bottom: 2px;
    border: solid #fff;
    border-width: 0 0 1px 1px;
    transform: rotate(-45deg);
  }

  .r-level {
    grid-template-columns: 55px 70px 7px;
    margin-left: 12px;
  }

  .mini {
    width: 17px;
    height: 17px;
    border: 1px solid #ccc;
    border-radius: 3px;
    background: #fdfdfd;
    display: grid;
    place-items: center;
  }

  .r-safe {
    grid-template-columns: 70px 62px 0;
    margin-left: 45px;
  }

  .section {
    display: flex;
    justify-content: space-between;
    margin: 1px 4px 0 2px;
  }

  .section-left {
    width: 380px;
  }

  .section-head {
    height: 31px;
    display: flex;
    align-items: center;
    padding-left: 6px;
  }

  .section-head .tick {
    margin: -4px 13px 0 102px;
  }

  .btn {
    height: 21px;
    border: 1px solid #cfcfcf;
    border-bottom-color: #b8b8b8;
    border-radius: 4px;
    background: #fdfdfd;
  }

  .btn.auto {
    width: 89px;
    height: 29px;
    color: #1e90ff;
  }

  .btn.clip {
    width: 29px;
    height: 29px;
    margin-left: 10px;
    display: grid;
    place-items: center;
  }

  .spec {
    width: 377px;
    height: 64px;
    padding: 9px 0 0 5px;
  }

  .spec-line {
    display: flex;
    align-items: center;
    margin-bottom: 5px;
  }

  .r-spec {
    grid-template-columns: 64px 87px 7px;
  }

  .r-flange {
    grid-template-columns: 73px 70px 30px;
    margin-left: 17px;
  }

  .r-weld {
    grid-template-columns: 65px 86px 30px;
  }

  .profile {
    width: 150px;
    height: 117px;
    background: #fff;
    border: 1px solid #666;
  }

  .strip.lug {
    height: 20px;
    margin: -18px 158px 0 2px;
  }

  .lug-pane {
    margin: 0 8px 0 2px;
    padding: 5px 0 5px 4px;
  }

  .lug-frame {
    height: 100px;
    border-right: none;
    padding: 9px 0 0 5px;
    display: flex;
    flex-direction: column;
    gap: 7px;
  }

  .r-lug {
    grid-template-columns: 73px 74px 31px 66px 62px 31px 71px 64px 40px;
  }

  .r-plate {
    grid-template-columns: 80px 74px 38px 66px 62px 7px;
  }

  .actions {
    display: flex;
    gap: 8px;
    margin: 9px 0 0 182px;
  }

  .check {
    width: 66px;
  }

  .book {
    width: 73px;
  }

  .lugbook {
    width: 99px;
  }

  .strip.out {
    height: 20px;
    margin: 7px 8px 0 2px;
  }

  .strip.out .active {
    width: 52px;
    text-align: left;
  }

  .out-pane {
    height: 123px;
    margin: 0 8px 0 2px;
    padding: 17px 0 0 4px;
  }

  .r-out {
    grid-template-columns: 99px 69px 29px 70px 83px 27px 53px 69px 30px;
    margin-bottom: 12px;
  }

  .group.draw {
    margin: 3px 5px 0 3px;
    height: 54px;
    padding: 7px 0 0 4px;
  }

  .group.draw legend {
    margin-left: 1px;
  }

  .draw-line {
    display: flex;
    align-items: center;
    height: 22px;
  }

  .draw-line .tick {
    margin-right: 16px;
  }

  .r-stiff {
    grid-template-columns: 78px 59px 30px;
    margin-left: 11px;
  }

  .make {
    width: 88px;
    margin: 0 8px 0 auto;
  }

  .file-btns {
    display: flex;
    justify-content: flex-end;
    gap: 7px;
    margin: 5px 8px 0 0;
  }

  .file-btns .btn {
    width: 62px;
    height: 23px;
  }

  /* row cells */
  .row :deep(.unit) {
    padding-left: 6px;
    font-family: "Liberation Mono", "Noto Sans CJK SC", monospace;
    font-size: 11px;
  }

  .row :deep(.spin) {
    display: flex;
    height: 21px;
    background: #fff;
    border: 1px solid #a9a9ae;
  }

  .row :deep(.spin input) {
    flex: 1;
    min-width: 0;
    width: 0;
    text-align: center;
    padding-bottom: 3px;
    color: #000;
    font-family: "Liberation Mono", monospace;
    font-size: 11px;
  }

  .row :deep(.spin.lt) {
    flex-direction: row-reverse;
  }

  .row :deep(.spin.off) {
    background: #f0f0f0;
  }

  .row :deep(.spin.off input) {
    color: #888;
  }

  .row :deep(.updown) {
    width: 14px;
    margin: 0 1px;
    display: flex;
    flex-direction: column;
  }

  .row :deep(.updown button) {
    flex: 1;
    display: grid;
    place-items: center;
    border: 1px solid #d4d4d4;
    background: #f6f6f6;
    color: #111;
  }

  .row :deep(.updown button:disabled) {
    color: #999;
  }

  .row :deep(.pick) {
    display: flex;
    align-items: center;
    height: 20px;
    background: #fff;
    border: 1px solid #cfcfcf;
    border-radius: 2px;
    padding: 0 4px 0 3px;
  }

  .row :deep(.pick select) {
    appearance: none;
    flex: 1;
    min-width: 0;
    height: 18px;
    color: #000;
  }

  .row :deep(.pick svg) {
    flex: none;
    margin-left: 2px;
  }

  .row :deep(.result) {
    height: 20px;
    width: 100%;
    padding: 0 0 3px 1px;
    color: #000;
    border: 1px solid #eee;
    border-bottom-color: #777;
    font-family: "Liberation Mono", monospace;
    font-size: 11px;
  }

  .row :deep(.good) {
    background: #90ee90;
  }

  .row :deep(.idle) {
    background: #d3d3d3;
  }

  /* right side */
  .right {
    flex: 1;
    min-width: 0;
    margin: 0 2px 0 7px;
    display: flex;
    flex-direction: column;
    background: #efefef;
    border-right: 1px solid #dedede;
  }

  .view {
    background: #f9f9f9;
    margin-right: 3px;
    border-right: 1px solid #dedede;
  }

  .view-strip {
    height: 24px;
  }

  .view-strip .tab {
    height: 18px;
    border-left: 1px solid #dedede;
  }

  .view-strip .tab.active {
    height: 21px;
    padding: 0 6px;
    border-left: none;
  }

  .view-strip .tick {
    margin: 0 13px 2px 0;
  }

  .view-strip .active + .tick {
    margin-left: 40px;
  }

  .canvas {
    position: relative;
    padding: 4px 5px 0 4px;
  }

  .canvas svg {
    width: 100%;
    height: auto;
  }

  .canvas text {
    white-space: pre;
  }

  .cad-serif {
    font-family: "Liberation Serif", "Noto Sans CJK SC", sans-serif;
  }

  .cad-sans {
    font-family: "Liberation Sans", "Noto Sans CJK SC", sans-serif;
  }

  .readouts {
    position: absolute;
    left: 7px;
    top: 9px;
    display: flex;
    flex-direction: column;
    align-items: flex-start;
    gap: 6px;
    font-family: "Liberation Mono", monospace;
    font-size: 11px;
  }

  .readouts span {
    background: #fafafa;
    line-height: 12px;
    padding: 0 2px;
  }

  .readouts .force {
    margin-top: 3px;
  }

  .results {
    margin: 10px 3px 0 0;
    background: #f9f9f9;
    flex: 1;
    min-height: 0;
  }

  .result-strip {
    height: 21px;
  }

  .results .tab {
    height: 18px;
  }

  .results .tab.active {
    height: 21px;
    padding: 0 6px;
  }

  .result-box {
    display: flex;
    height: 102px;
    margin: 3px 5px 0 3px;
    border: 1px solid #777;
    border-right: none;
    border-bottom-color: #ddd;
  }

  .result-box textarea {
    flex: 1;
    resize: none;
    overflow: hidden;
    padding: 2px 1px;
    background: #90ee90;
    color: #000;
    line-height: 16px;
    white-space: pre;
  }

  .result-bar {
    width: 17px;
    padding: 18px 0 0 8px;
    background: #f4f4f4;
  }

  .result-bar i {
    display: block;
    width: 2px;
    height: 43px;
    background: #868686;
  }

  .status {
    height: 25px;
    flex: none;
    display: flex;
    align-items: center;
    justify-content: flex-end;
    padding-right: 6px;
    gap: 14px;
  }

  .status span {
    margin-right: 38px;
  }

  .status a {
    color: #00f;
  }

  .taskbar {
    height: 8px;
    flex: none;
    background: #2b2118;
  }

  .taskbar i {
    display: block;
    width: 40px;
    height: 4px;
    margin: 0 0 0 633px;
    border-radius: 4px 4px 0 0;
    background: #3c332a;
  }
</style>
